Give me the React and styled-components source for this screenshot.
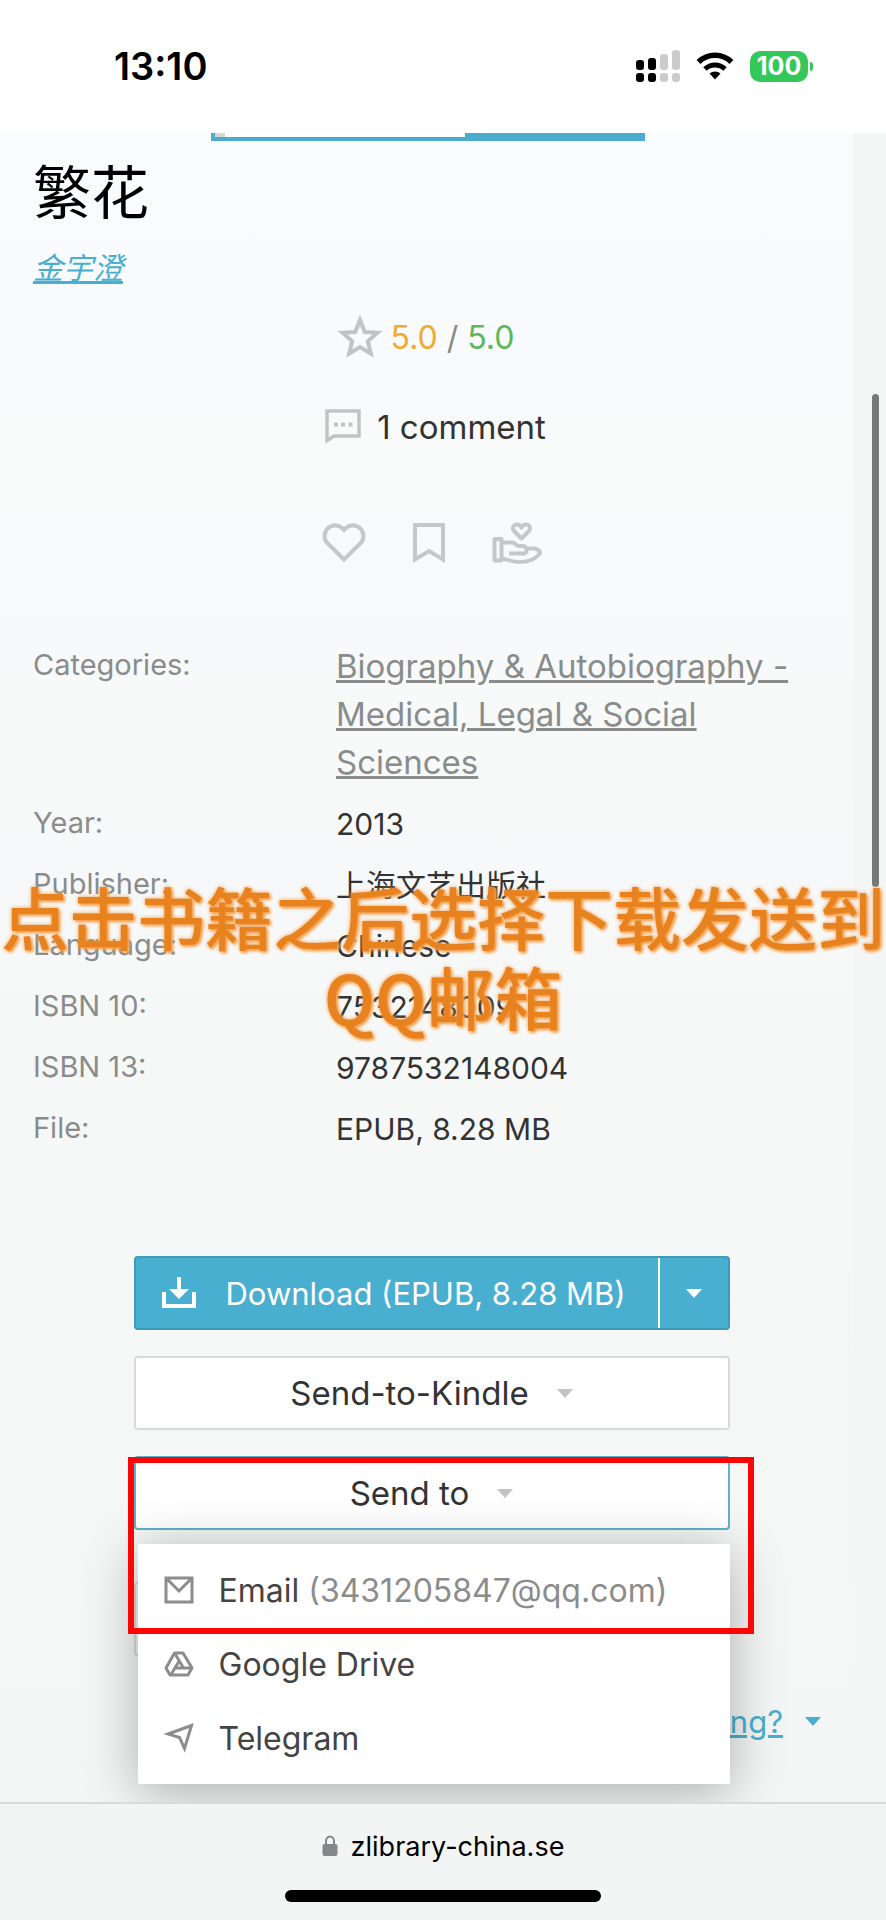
import styled, { createGlobalStyle } from 'styled-components';

const details = [
    { label: 'Year:', value: '2013' },
    { label: 'Publisher:', value: '上海文艺出版社' },
    { label: 'Language:', value: 'Chinese' },
    { label: 'ISBN 10:', value: '7532148009' },
    { label: 'ISBN 13:', value: '9787532148004' },
    { label: 'File:', value: 'EPUB, 8.28 MB' },
];

const SignalIcon = ()=>(
    <svg width="44" height="32" viewBox="0 0 44 32" aria-hidden="true">
        <rect x="0" y="10" width="8" height="10" rx="3"/>
        <rect x="12" y="8" width="8" height="12" rx="3"/>
        <rect x="24" y="4" width="8" height="16" rx="3" fill="#cbcbcb"/>
        <rect x="36" y="0" width="8" height="20" rx="3" fill="#cbcbcb"/>
        <rect x="0" y="23" width="8" height="9" rx="3"/>
        <rect x="12" y="23" width="8" height="9" rx="3"/>
        <rect x="24" y="23" width="8" height="9" rx="3" fill="#cbcbcb"/>
        <rect x="36" y="23" width="8" height="9" rx="3" fill="#cbcbcb"/>
    </svg>
)

const WifiIcon = ()=>(
    <svg width="38" height="28" viewBox="0 0 38 28" aria-hidden="true">
        <path d="M2.5 10 A23.5 23.5 0 0 1 35.5 10" fill="none" stroke="#000" strokeWidth="5.5"/>
        <path d="M9 17 A14.5 14.5 0 0 1 29 17" fill="none" stroke="#000" strokeWidth="5"/>
        <path d="M13.5 21.5 A8.5 8.5 0 0 1 24.5 21.5 L19 27.5 Z"/>
    </svg>
)

const StarIcon = ()=>(
    <svg width="46" height="46" viewBox="0 0 46 46" fill="none" stroke="#c3c3c3" strokeWidth="4" aria-hidden="true">
        <path d="M23 6 L27.8 18 L40.5 18.8 L30.8 27.2 L33.8 39.5 L23 33 L12.2 39.5 L15.2 27.2 L5.5 18.8 L18.2 18 Z"/>
    </svg>
)

const CommentIcon = ()=>(
    <svg width="36" height="36" viewBox="0 0 36 36" aria-hidden="true">
        <path d="M2 2 H34 V27 H9 L2 31.5 Z" fill="none" stroke="#c3c3c3" strokeWidth="3.5"/>
        <path d="M9 13.5h4v4h-4z M16 13.5h4v4h-4z M23.5 13.5h4v4h-4z" fill="#c3c3c3"/>
    </svg>
)

const HeartIcon = ()=>(
    <svg width="44" height="42" viewBox="0 0 44 42" fill="none" stroke="#c6c8c8" strokeWidth="4" aria-hidden="true">
        <path d="M22 37.5 L5.8 21.5 A10.2 10.2 0 0 1 4.5 8 A10.5 10.5 0 0 1 19.5 5.5 L22 8 L24.5 5.5 A10.5 10.5 0 0 1 39.5 8 A10.2 10.2 0 0 1 38.2 21.5 Z"/>
    </svg>
)

const BookmarkIcon = ()=>(
    <svg width="34" height="42" viewBox="0 0 34 42" fill="none" stroke="#c6c8c8" strokeWidth="4" aria-hidden="true">
        <path d="M3 3 H31 V37.5 L17 29 L3 37.5 Z"/>
    </svg>
)

const DonateIcon = ()=>(
    <svg width="50" height="42" viewBox="0 0 50 42" fill="none" stroke="#c6c8c8" strokeWidth="4" strokeLinejoin="round" aria-hidden="true">
        <path d="M29.5 16.5 L22.5 9.5 C19.5 6.5 21.5 2.5 25 2.5 C27 2.5 28.5 3.5 29.5 5.5 C30.5 3.5 32 2.5 34 2.5 C37.5 2.5 39.5 6.5 36.5 9.5 Z"/>
        <path d="M2.5 17 H9.5 V38.5 H2.5 Z"/>
        <path d="M9.5 20.5 H20 C23 20.5 24 24 27 24 H31 C34.5 24 35 29 34 31.5 M17 31.5 H34 M34 26.5 H42 C45 26.5 47 28.5 48.5 30.5 C44 37.5 38 40 28 40 C20 40 16 37.5 9.5 36.5"/>
    </svg>
)

const DownloadIcon = ()=>(
    <svg width="34" height="32" viewBox="0 0 34 32" aria-hidden="true">
        <path d="M2 15 V29 H32 V15" fill="none" stroke="#fff" strokeWidth="4"/>
        <path d="M17 0 V14" stroke="#fff" strokeWidth="4"/>
        <path d="M7 12 H27 L17 22 Z" fill="#fff"/>
    </svg>
)

const MailIcon = ()=>(
    <svg width="30" height="28" viewBox="0 0 30 28" fill="none" stroke="#8c8c8c" strokeWidth="3" aria-hidden="true">
        <path d="M2 2 H28 V26 H2 Z M3 3 L15 15 L27 3"/>
    </svg>
)

const DriveIcon = ()=>(
    <svg width="30" height="26" viewBox="0 0 30 26" fill="none" stroke="#8c8c8c" strokeWidth="3" strokeLinejoin="round" aria-hidden="true">
        <path d="M10.5 2 H19 L28 17 L24 24 H6 L2 17 Z"/>
        <path d="M10.5 2 L19.5 17 M15.5 9.5 L7 23.5 M11 17 H28"/>
    </svg>
)

const PlaneIcon = ()=>(
    <svg width="30" height="30" viewBox="0 0 30 30" fill="none" stroke="#8c8c8c" strokeWidth="3" aria-hidden="true">
        <path d="M27.5 2.5 L20.5 25.5 L15.5 14.5 L4 11 Z"/>
    </svg>
)

const LockIcon = ()=>(
    <svg width="16" height="22" viewBox="0 0 16 22" aria-hidden="true">
        <path d="M4 10 V6 A4 4.5 0 0 1 12 6 V10" fill="none" stroke="#858688" strokeWidth="2"/>
        <rect x="0.5" y="9" width="15" height="12" rx="2" fill="#858688"/>
    </svg>
)

const App = ()=>{
    return (
        <>
            <GlobalStyle/>
            <Page>
                <StatusBar>
                    <Time>13:10</Time>
                    <StatusIcons>
                        <SignalIcon/>
                        <WifiIcon/>
                        <Battery>100</Battery>
                    </StatusIcons>
                </StatusBar>
                <Main>
                    <Cover><CoverImage/></Cover>
                    <Title>繁花</Title>
                    <Author href="#author">金宇澄</Author>
                    <Rating>
                        <StarIcon/>
                        <span><Score color="#f0ab2e">5.0</Score> / <Score color="#5cb85c">5.0</Score></span>
                    </Rating>
                    <Comments href="#comments"><CommentIcon/>1 comment</Comments>
                    <Actions>
                        <IconButton aria-label="Favorite"><HeartIcon/></IconButton>
                        <IconButton aria-label="Save"><BookmarkIcon/></IconButton>
                        <IconButton aria-label="Donate"><DonateIcon/></IconButton>
                    </Actions>
                    <Details>
                        <Row>
                            <Label>Categories:</Label>
                            <Value><Category href="#category">Biography &amp; Autobiography - Medical, Legal &amp; Social Sciences</Category></Value>
                        </Row>
                        {details.map(({ label, value }) => (
                            <Row key={label}>
                                <Label>{label}</Label>
                                <Value>{value}</Value>
                            </Row>
                        ))}
                    </Details>
                    <Buttons>
                        <Split>
                            <Download><DownloadIcon/>Download (EPUB, 8.28 MB)</Download>
                            <Toggle aria-label="Other formats"><Caret color="#fff"/></Toggle>
                        </Split>
                        <Button>Send-to-Kindle<Caret color="#c3c3c3"/></Button>
                        <Dropdown>
                            <Button $active>Send to<Caret color="#c3c3c3"/></Button>
                            <Menu>
                                <MenuItem><MailIcon/><span>Email <Address>(3431205847@qq.com)</Address></span></MenuItem>
                                <MenuItem><DriveIcon/>Google Drive</MenuItem>
                                <MenuItem><PlaneIcon/>Telegram</MenuItem>
                            </Menu>
                            <Highlight/>
                        </Dropdown>
                        <Covered/>
                    </Buttons>
                    <Help><HelpLink href="#help">ng?</HelpLink><Caret color="#49afd0"/></Help>
                    <ScrollThumb/>
                </Main>
                <BrowserBar>
                    <Url><LockIcon/>zlibrary-china.se</Url>
                    <HomeIndicator/>
                </BrowserBar>
                <Caption>点击书籍之后选择下载发送到QQ邮箱</Caption>
            </Page>
        </>
    )
}

const GlobalStyle = createGlobalStyle`
    * {
        box-sizing: border-box;
    }
    body {
        margin: 0;
        background-color: #f7f9f9;
        font-family: Inter, "Noto Sans CJK SC", sans-serif;
        font-size: 30px;
        color: #333;
    }
    button {
        margin: 0;
        padding: 0;
        border: none;
        background: none;
        font: inherit;
        color: inherit;
        cursor: pointer;
    }
    a {
        color: inherit;
    }
    svg {
        display: block;
        flex-shrink: 0;
    }
`;
const Page = styled.div`
    position: relative;
    display: flex;
    flex-direction: column;
    min-height: 100vh;
    overflow: hidden;
`;
const StatusBar = styled.header`
    display: flex;
    justify-content: space-between;
    height: 133px;
    padding: 46px 78px 0 114px;
    background-color: #fff;
    color: #000;
`;
const Time = styled.div`
    font-size: 38px;
    font-weight: 600;
    line-height: 40px;
`;
const StatusIcons = styled.div`
    display: flex;
    align-items: center;
    gap: 16px;
    height: 40px;
`;
const Battery = styled.div`
    position: relative;
    width: 58px;
    height: 31px;
    border-radius: 10px;
    background-color: #34c759;
    color: #fff;
    font-size: 25px;
    font-weight: 700;
    line-height: 31px;
    text-align: center;
    &::after {
        content: "";
        position: absolute;
        right: -5px;
        top: 11px;
        width: 3px;
        height: 9px;
        border-radius: 0 3px 3px 0;
        background-color: #34c759;
    }
`;
const Main = styled.main`
    position: relative;
    flex: 1;
    display: flex;
    flex-direction: column;
    padding: 0 56px 0 33px;
    background: linear-gradient(to left, #f4f5f5 32px, transparent 33px), linear-gradient(#f9fbfc, #f6f8f8 60%, #f4f6f6);
`;
const Cover = styled.div`
    align-self: center;
    width: 434px;
    height: 8px;
    margin-right: 8px;
    padding: 0 180px 4px 4px;
    background-color: #4badcd;
`;
const CoverImage = styled.div`
    height: 4px;
    border-left: 10px solid #d5d8d9;
    background-color: #fff;
`;
const Title = styled.h1`
    margin: 12px 0 0;
    font-size: 58px;
    font-weight: 400;
    line-height: 80px;
    color: #000;
`;
const Author = styled.a`
    align-self: flex-start;
    margin-top: 15px;
    font-style: italic;
    line-height: 40px;
    color: #49afd0;
`;
const Rating = styled.div`
    display: flex;
    justify-content: center;
    align-items: center;
    gap: 8px;
    height: 48px;
    margin: 25px 12px 0 0;
    font-size: 32px;
    color: #888;
`;
const Score = styled.span`
    color: ${props => props.color};
`;
const Comments = styled.a`
    display: flex;
    justify-content: center;
    align-items: center;
    gap: 16px;
    height: 48px;
    margin: 42px 0 0 8px;
    font-size: 33px;
    text-decoration: none;
`;
const Actions = styled.div`
    display: flex;
    justify-content: center;
    align-items: center;
    gap: 46px;
    height: 48px;
    margin-top: 68px;
`;
const IconButton = styled.button`
    display: block;
`;
const Details = styled.dl`
    display: grid;
    row-gap: 14px;
    margin: 76px 0 0;
    line-height: 47px;
`;
const Row = styled.div`
    display: grid;
    grid-template-columns: 303px 1fr;
`;
const Label = styled.dt`
    font-size: 29px;
    line-height: 44px;
    color: #8a8c8c;
`;
const Value = styled.dd`
    margin: 0;
`;
const Category = styled.a`
    font-size: 33px;
    color: #8a8c8c;
`;
const Buttons = styled.div`
    display: flex;
    flex-direction: column;
    gap: 26px;
    width: 596px;
    max-width: 100%;
    margin: 103px auto 0;
`;
const Button = styled.button`
    display: flex;
    justify-content: center;
    align-items: center;
    gap: 28px;
    width: 100%;
    height: 74px;
    border: 2px solid ${props => props.$active ? "#5fb0cc" : "#d8dada"};
    border-radius: 4px;
    background-color: #fff;
    font-size: 33px;
`;
const Split = styled.div`
    display: flex;
    height: 74px;
    border: 2px solid #3f99b8;
    border-radius: 4px;
    background-color: #49afd0;
    color: #fff;
`;
const Download = styled.button`
    flex: 1;
    display: flex;
    align-items: center;
    gap: 30px;
    padding-left: 26px;
    font-size: 31px;
    white-space: nowrap;
`;
const Toggle = styled.button`
    display: flex;
    justify-content: center;
    align-items: center;
    width: 70px;
    border-left: 2px solid #fff;
`;
const Caret = styled.span`
    border: 8px solid transparent;
    border-top: 9px solid ${props => props.color};
    border-bottom: none;
`;
const Dropdown = styled.div`
    position: relative;
    z-index: 1;
`;
const Menu = styled.div`
    position: absolute;
    top: 88px;
    left: 4px;
    right: 0;
    padding: 9px 0;
    background-color: #fff;
    box-shadow: 0 8px 50px rgba(0, 0, 0, 0.3);
`;
const MenuItem = styled.button`
    display: flex;
    align-items: center;
    gap: 25px;
    width: 100%;
    height: 74px;
    padding-left: 26px;
    font-size: 32px;
    color: #444;
`;
const Address = styled.span`
    color: #8c8c8c;
`;
const Highlight = styled.div`
    position: absolute;
    top: 1px;
    left: -6px;
    right: -24px;
    height: 177px;
    border: 6px solid #fb0505;
    pointer-events: none;
`;
const Covered = styled.div`
    height: 74px;
    margin-top: 26px;
    border: 2px solid #d8dada;
    border-radius: 4px;
`;
const Help = styled.div`
    display: flex;
    justify-content: flex-end;
    align-items: center;
    gap: 22px;
    height: 48px;
    margin: 41px 9px 0 0;
`;
const HelpLink = styled.a`
    font-size: 31px;
    color: #49afd0;
`;
const ScrollThumb = styled.div`
    position: absolute;
    top: 261px;
    right: 7px;
    width: 7px;
    height: 493px;
    border-radius: 4px;
    background-color: #777979;
`;
const BrowserBar = styled.footer`
    position: relative;
    z-index: 2;
    display: flex;
    flex-direction: column;
    align-items: center;
    height: 118px;
    padding-top: 24px;
    border-top: 2px solid #d9dbdb;
    background-color: #f3f5f5;
    color: #000;
`;
const Url = styled.div`
    display: flex;
    align-items: center;
    gap: 13px;
    height: 36px;
    font-size: 27px;
`;
const HomeIndicator = styled.div`
    width: 316px;
    height: 12px;
    margin-top: 26px;
    border-radius: 6px;
    background-color: #000;
`;
const Caption = styled.p`
    position: absolute;
    top: 876px;
    left: 0;
    right: 0;
    margin: 0;
    font-family: "Noto Sans CJK SC", sans-serif;
    font-size: 68px;
    font-weight: 500;
    line-height: 80px;
    text-align: center;
    color: #e8821e;
    text-shadow: 0 0 4px #f3a04c, 2px 2px 3px #f3a04c;
    z-index: 3;
`;

export default App;
